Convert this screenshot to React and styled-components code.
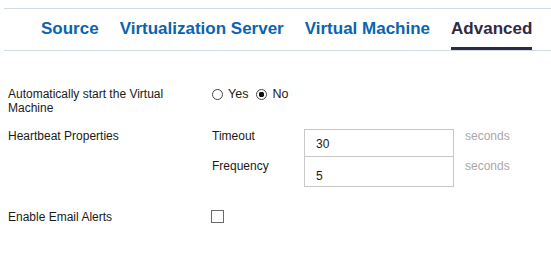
import styled, { createGlobalStyle } from "styled-components";

const GlobalStyle = createGlobalStyle`
    body {
        margin: 0;
        background: #ffffff;
        font-family: "Liberation Sans", Arial, sans-serif;
        font-size: 12px;
        color: #1a1a1a;
    }
`

const tabs = ["Source", "Virtualization Server", "Virtual Machine", "Advanced"];

function App () {
    return (
        <>
            <GlobalStyle />
            <TabBar>
                {tabs.map((name) =>
                    <Tab key={name} active={name === "Advanced"}>{name}</Tab>
                )}
            </TabBar>
            <Form>
                <Row>
                    <Label>Automatically start the Virtual Machine</Label>
                    <Controls>
                        <Choice>
                            <Radio type="radio" name="autostart" />
                            Yes
                        </Choice>
                        <Choice>
                            <Radio type="radio" name="autostart" defaultChecked />
                            No
                        </Choice>
                    </Controls>
                </Row>

                <Heartbeat>
                    <Label>Heartbeat Properties</Label>
                    <SubLabel>Timeout</SubLabel>
                    <Field defaultValue="30" />
                    <Unit>seconds</Unit>

                    <span />
                    <SubLabel lower>Frequency</SubLabel>
                    <Field defaultValue="5" tall />
                    <Unit lower>seconds</Unit>
                </Heartbeat>

                <Row spaced>
                    <Label>Enable Email Alerts</Label>
                    <Check type="checkbox" />
                </Row>
            </Form>
        </>
    )
}

const TabBar = styled.nav`
    margin: 8px 0 0 4px;
    height: 43px;
    box-sizing: border-box;
    padding-left: 37px;
    border-top: 1px solid #d3dbe3;
    border-bottom: 1px solid #d3dbe3;

    display: flex;
    gap: 21px;
`

const Tab = styled.div`
    height: 41px;
    box-sizing: border-box;
    padding-top: 10px;
    line-height: 19px;

    font-size: 17px;
    font-weight: 700;
    color: ${(p) => p.active ? "#302a45" : "#0a64b0"};
    border-bottom: 3px solid ${(p) => p.active ? "#302a45" : "transparent"};
`

const Form = styled.div`
    padding: 36px 0 0 8px;
    line-height: 14px;
`

const Row = styled.div`
    display: flex;
    align-items: flex-start;
    margin-top: ${(p) => p.spaced ? "23px" : "0"};
`

const Label = styled.div`
    width: 204px;
    padding-right: 34px;
    box-sizing: border-box;
`

const Controls = styled.div`
    display: flex;
    gap: 8px;
    height: 14px;
    align-items: center;
`

const Choice = styled.label`
    display: flex;
    align-items: center;
    gap: 5px;
    font-size: 12.5px;
`

const Radio = styled.input`
    appearance: none;
    margin: 0;
    width: 11px;
    height: 11px;
    border: 1px solid #444;
    border-radius: 50%;
    box-sizing: border-box;
    background: #fff;

    &:checked {
        background: radial-gradient(circle, #111 0 2.6px, #fff 3px);
    }
`

const Heartbeat = styled.div`
    margin-top: 14px;
    display: grid;
    grid-template-columns: 204px 92px 150px auto;
    grid-template-rows: 27px 31px;
    align-items: start;
`

const SubLabel = styled.div`
    padding-top: ${(p) => p.lower ? "3px" : "0"};
`

const Field = styled.input`
    width: 150px;
    height: ${(p) => p.tall ? "31px" : "28px"};
    margin: 0;
    box-sizing: border-box;
    padding: ${(p) => p.tall ? "8px 11px 0" : "1px 11px 0"};
    border: 1px solid #c8c8c8;
    font-family: "Liberation Sans", Arial, sans-serif;
    font-size: 12px;
    color: #1a1a1a;
    outline: none;
`

const Unit = styled.div`
    padding: ${(p) => p.lower ? "3px" : "0"} 0 0 11px;
    color: #a8a8a8;
`

const Check = styled.input`
    appearance: none;
    margin: 0 0 0 -1px;
    width: 13px;
    height: 13px;
    border: 1px solid #6a6a6a;
    box-sizing: border-box;
    background: #fff;
`

export default App
